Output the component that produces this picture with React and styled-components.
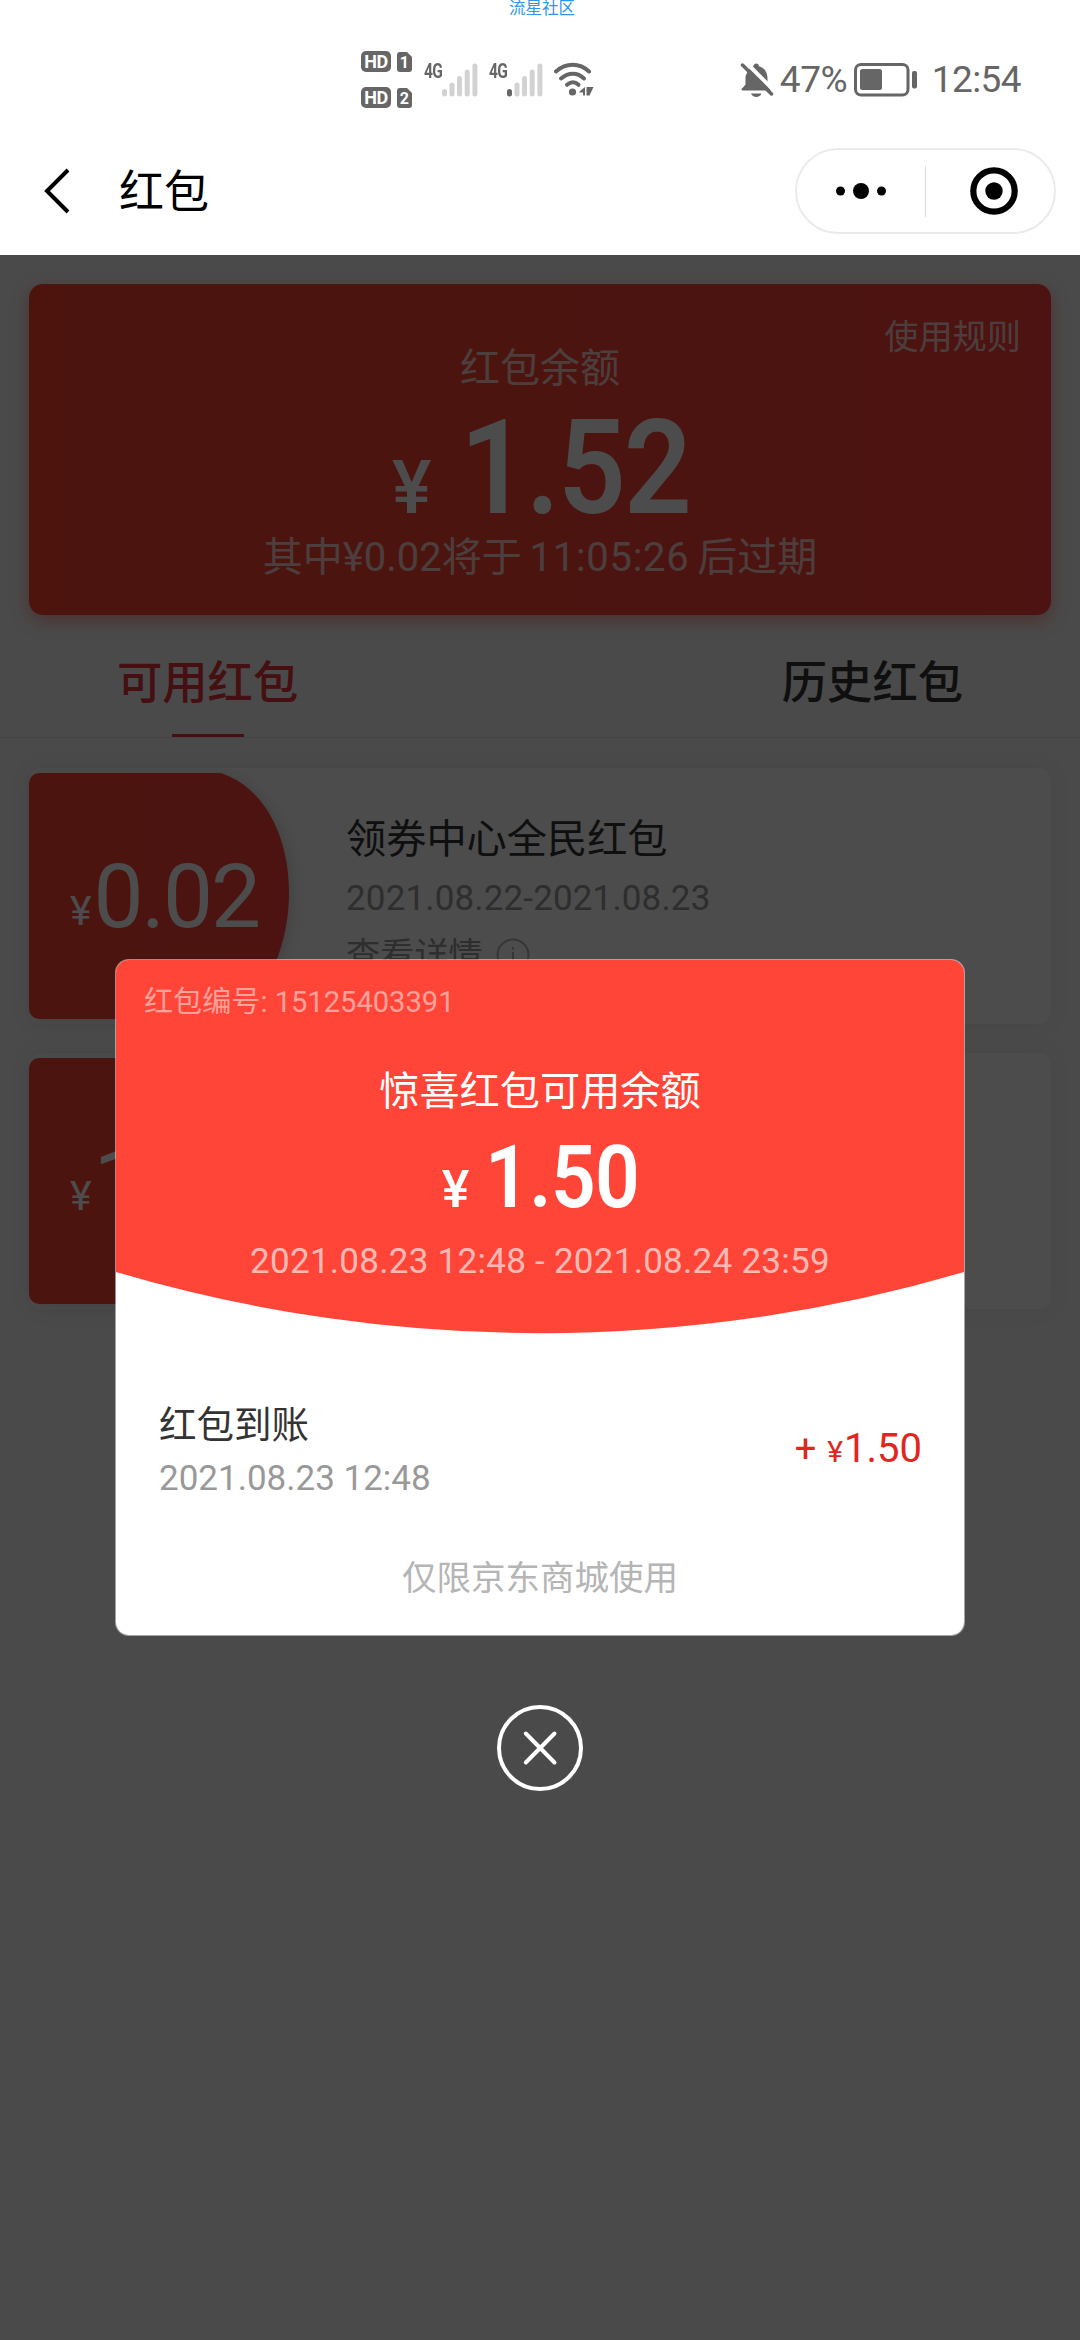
import React, { useState } from 'react'
import styled, { createGlobalStyle } from 'styled-components';

const coupons = [
  { id: 1, amount: '0.02', name: '领券中心全民红包', date: '2021.08.22-2021.08.23' },
  { id: 2, amount: '1.50', name: '惊喜红包', date: '2021.08.23-2021.08.24' },
];

const Signal = ({ active }) => (
  <svg width='36' height='34' viewBox='0 0 36 34'>
    <rect x='0' y='26' width='5' height='7.5' rx='2.5' fill={active ? '#666' : '#d2d2d2'} />
    <rect x='7.5' y='19.5' width='5' height='14' rx='2.5' fill='#d2d2d2' />
    <rect x='15' y='13' width='5' height='20.5' rx='2.5' fill='#d2d2d2' />
    <rect x='22.7' y='6.5' width='5' height='27' rx='2.5' fill='#d2d2d2' />
    <rect x='30.4' y='0.5' width='5' height='33' rx='2.5' fill='#d2d2d2' />
  </svg>
);

const SimCard = ({ number }) => (
  <svg width='15' height='20' viewBox='0 0 15 20'>
    <path d='M3 0H10L15 5V17a3 3 0 0 1-3 3H3a3 3 0 0 1-3-3V3a3 3 0 0 1 3-3Z' fill='#666' />
    <text x='7.3' y='16' textAnchor='middle' fontFamily='Roboto, sans-serif' fontWeight='700' fontSize='16' fill='#fff'>{number}</text>
  </svg>
);

const Wifi = () => (
  <svg width='42' height='36' viewBox='0 0 42 36'>
    <g fill='none' stroke='#666' strokeWidth='4' strokeLinecap='round'>
      <path d='M2 9.500C12 0.500 25.500 0.500 35 9.500' />
      <path d='M7 16.500C14.500 10 23.500 10 30 16.500' />
      <path d='M13 22.800C17 19.500 21 19.500 24.500 22.800' />
    </g>
    <circle cx='18.500' cy='30' r='3.600' fill='#666' />
    <path d='M31 25V33.500H29V30.500H25.500V29.500Z M32.500 25H39.500L35.500 33.500H32.500Z' fill='#666' />
  </svg>
);

const BellOff = () => (
  <svg width='34' height='36' viewBox='0 0 34 36'>
    <path d='M7 11C9 6 11.500 5 13.500 4.200C13.500 0.500 19 0.500 19 4.200C25 6 27.500 11 27.500 16.500V22.500L31 28.500H3C1 28.500 1 26.500 3 25.500L5.500 22.500V16C5.500 14 6 12.500 7 11Z' fill='#666' />
    <path d='M11 31.500H21.500C20 36 12.500 36 11 31.500Z' fill='#666' />
    <path d='M5 -0.500L34 28.500' stroke='#fff' strokeWidth='4' />
    <path d='M2.500 3L31.500 32' stroke='#666' strokeWidth='3.500' strokeLinecap='round' />
  </svg>
);

const Battery = () => (
  <svg width='64' height='34' viewBox='0 0 64 34'>
    <rect x='1.500' y='1.500' width='52.500' height='30.500' rx='5.500' fill='none' stroke='#666' strokeWidth='3' />
    <rect x='6' y='6' width='22' height='21' rx='2.500' fill='#666' />
    <rect x='58' y='8' width='5' height='17.500' rx='2' fill='#666' />
  </svg>
);

const App = () => {
  const [open, setOpen] = useState(true);
  return (
    <Page>
      <GlobalStyle />
      <Watermark>流星社区</Watermark>
      <StatusBar>
        <NetworkInfo>
          <SimRows>
            <SimRow><HdBadge>HD</HdBadge><SimCard number='1' /></SimRow>
            <SimRow><HdBadge>HD</HdBadge><SimCard number='2' /></SimRow>
          </SimRows>
          <SignalGroup><NetType>4G</NetType><Signal /></SignalGroup>
          <SignalGroup><NetType>4G</NetType><Signal active /></SignalGroup>
          <Wifi />
        </NetworkInfo>
        <DeviceInfo>
          <BellOff />
          <Percent>47%</Percent>
          <Battery />
          <Clock>12:54</Clock>
        </DeviceInfo>
      </StatusBar>
      <NavBar>
        <BackButton>
          <svg width='26' height='46' viewBox='0 0 26 46'>
            <path d='M24 2L3 23L24 44' fill='none' stroke='#000' strokeWidth='4' />
          </svg>
        </BackButton>
        <NavTitle>红包</NavTitle>
        <Capsule>
          <CapsuleButton>
            <svg width='52' height='18' viewBox='0 0 52 18'>
              <circle cx='5.500' cy='9' r='4.500' />
              <circle cx='26' cy='9' r='8' />
              <circle cx='46.500' cy='9' r='4.500' />
            </svg>
          </CapsuleButton>
          <CapsuleLine />
          <CapsuleButton $shift='7px'>
            <svg width='48' height='48' viewBox='0 0 48 48'>
              <circle cx='24' cy='24' r='20.700' fill='none' stroke='#000' strokeWidth='6.200' />
              <circle cx='24' cy='24' r='8.700' />
            </svg>
          </CapsuleButton>
        </Capsule>
      </NavBar>
      <Body>
        <BalanceCard>
          <Rules>使用规则</Rules>
          <BalanceTitle>红包余额</BalanceTitle>
          <BalanceAmount><small>¥</small><Digits $trim='-25px'>1.52</Digits></BalanceAmount>
          <Expire>其中¥0.02将于 <b>11:05:26</b> 后过期</Expire>
        </BalanceCard>
        <Tabs>
          <Tab $active>可用红包</Tab>
          <Tab>历史红包</Tab>
        </Tabs>
        <CouponList>
          {
            coupons.map((data) => (
              <Coupon key={data.id}>
                <CouponLeft>
                  <CouponShape width='260' height='246' viewBox='0 0 260 246'>
                    <defs>
                      <linearGradient id={`red${data.id}`} x1='0' x2='1' y1='0' y2='0'>
                        <stop offset='0' stopColor='#ff4530' />
                        <stop offset='1' stopColor='#ff423c' />
                      </linearGradient>
                    </defs>
                    <path d='M10 0H192C276 28 284 182 206 246H10A10 10 0 0 1 0 236V10A10 10 0 0 1 10 0Z' fill={`url(#red${data.id})`} />
                  </CouponShape>
                  <CouponAmount><small>¥</small>{data.amount}</CouponAmount>
                </CouponLeft>
                <CouponInfo>
                  <CouponName>{data.name}</CouponName>
                  <CouponDate>{data.date}</CouponDate>
                  <CouponDetail>
                    查看详情
                    <svg width='34' height='34' viewBox='0 0 34 34' fill='none' stroke='#b4b4b4' strokeWidth='2'>
                      <circle cx='17' cy='17' r='15.500' />
                      <path d='M17 14V25M17 9V11.500' />
                    </svg>
                  </CouponDetail>
                </CouponInfo>
              </Coupon>
            ))
          }
        </CouponList>
        {open && (
          <Overlay>
            <Modal>
              <ModalTop>
                <ModalCode>红包编号: 15125403391</ModalCode>
                <ModalTitle>惊喜红包可用余额</ModalTitle>
                <ModalAmount><small>¥</small><Digits $trim='-16px'>1.50</Digits></ModalAmount>
                <ModalRange>2021.08.23 12:48 - 2021.08.24 23:59</ModalRange>
              </ModalTop>
              <Record>
                <div>
                  <RecordName>红包到账</RecordName>
                  <RecordTime>2021.08.23 12:48</RecordTime>
                </div>
                <RecordAmount><span>+</span><small>¥</small>1.50</RecordAmount>
              </Record>
              <Limit>仅限京东商城使用</Limit>
            </Modal>
            <CloseButton onClick={() => setOpen(false)}>
              <svg width='88' height='88' viewBox='0 0 88 88' fill='none' stroke='#fff' strokeLinecap='round'>
                <circle cx='44' cy='44' r='41' strokeWidth='4' />
                <path d='M29.800 29.500L58.500 58.500M58.500 29.500L29.800 58.500' strokeWidth='4' />
              </svg>
            </CloseButton>
          </Overlay>
        )}
      </Body>
    </Page>
  )
}

const GlobalStyle = createGlobalStyle`
  * {
    box-sizing: border-box;
  }
  body {
    margin: 0;
    font-family: Roboto, 'Noto Sans CJK SC', sans-serif;
  }
  svg {
    display: block;
    flex: none;
  }
  button {
    padding: 0;
    border: 0;
    background: transparent;
    cursor: pointer;
  }
`;

const Page = styled.div`
  display: flex;
  flex-direction: column;
  width: 1080px;
  height: 2340px;
  overflow: hidden;
  background-color: #fff;
  white-space: nowrap;
`;

const Watermark = styled.div`
  height: 18px;
  padding-left: 4px;
  font-size: 16.5px;
  line-height: 17px;
  text-align: center;
  color: #2f97ea;
`;

const StatusBar = styled.div`
  display: flex;
  justify-content: space-between;
  align-items: center;
  height: 124px;
  padding: 0 59px 1px 361px;
  color: #666;
`;

const NetworkInfo = styled.div`
  display: flex;
  align-items: center;
`;

const SimRows = styled.div`
  display: flex;
  flex-direction: column;
  gap: 15px;
  margin-right: 12px;
`;

const SimRow = styled.div`
  display: flex;
  align-items: center;
  gap: 6px;
`;

const HdBadge = styled.span`
  width: 30px;
  height: 21px;
  border-radius: 5px;
  background-color: #666;
  color: #fff;
  font-size: 18px;
  font-weight: 700;
  line-height: 21px;
  text-align: center;
  letter-spacing: -.5px;
`;

const SignalGroup = styled.div`
  display: flex;
  width: 53px;
  margin-right: 12px;
`;

const NetType = styled.span`
  width: 18px;
  font-size: 21px;
  font-weight: 700;
  line-height: 16px;
  letter-spacing: -1px;
  transform: scaleX(.74);
  transform-origin: left;
`;

const DeviceInfo = styled.div`
  display: flex;
  align-items: center;
`;

const Percent = styled.span`
  width: 67px;
  margin: 0 7px 0 6px;
  font-size: 37px;
  letter-spacing: -.5px;
`;

const Clock = styled.span`
  margin-left: 14px;
  font-size: 37px;
  letter-spacing: -.6px;
`;

const NavBar = styled.div`
  display: flex;
  align-items: center;
  height: 113px;
  padding: 0 24px 15px 44px;
`;

const BackButton = styled.button`
  margin-right: 49px;
`;

const NavTitle = styled.h1`
  margin: 4px 0 0;
  font-size: 45px;
  font-weight: 400;
  line-height: 60px;
`;

const Capsule = styled.div`
  display: flex;
  align-items: center;
  width: 261px;
  height: 86px;
  margin-left: auto;
  border: 2px solid #ebebeb;
  border-radius: 43px;
`;

const CapsuleButton = styled.button`
  display: flex;
  flex: none;
  justify-content: center;
  width: 128px;
  padding-left: ${({ $shift }) => $shift || 0};
`;

const CapsuleLine = styled.i`
  width: 1px;
  height: 51px;
  background-color: #dcdcdc;
`;

const Body = styled.main`
  position: relative;
  flex: 1;
  padding-top: 29px;
  background-color: #f7f7f7;
`;

const BalanceCard = styled.section`
  display: flex;
  flex-direction: column;
  align-items: center;
  height: 331px;
  margin: 0 29px;
  padding-top: 33px;
  border-radius: 14px;
  background: linear-gradient(90deg, #ff452e, #ff423c);
  box-shadow: 0 6px 18px rgba(255, 69, 50, .45);
  color: rgba(255, 255, 255, .75);
`;

const Rules = styled.span`
  align-self: flex-end;
  margin-right: 30px;
  font-size: 34.2px;
  line-height: 40px;
`;

const BalanceTitle = styled.div`
  margin-top: -13px;
  font-size: 40px;
  line-height: 50px;
`;

const Digits = styled.span`
  display: inline-block;
  margin-right: ${({ $trim }) => $trim};
  transform: scaleX(.9);
  transform-origin: left;
`;

const BalanceAmount = styled.div`
  height: 130px;
  margin: 9px 0 0 3px;
  font-size: 132px;
  font-weight: 600;
  line-height: 130px;
  letter-spacing: -2px;
  color: #fff;
  small {
    margin-right: 31px;
    font-size: 74px;
    font-weight: 500;
    line-height: 1;
  }
`;

const Expire = styled.div`
  font-size: 40px;
  line-height: 50px;
  b {
    margin: 0 -2px;
    font-weight: 400;
    letter-spacing: .7px;
  }
`;

const Tabs = styled.div`
  display: flex;
  justify-content: space-between;
  height: 123px;
  padding: 36px 117px 0;
  border-bottom: 1px solid #e4e4e4;
`;

const Tab = styled.div`
  display: flex;
  flex-direction: column;
  justify-content: space-between;
  align-items: center;
  font-size: 45.3px;
  font-weight: 500;
  line-height: 66px;
  color: ${({ $active }) => $active ? '#e9343a' : '#333'};
  &::after {
    content: '';
    width: 72px;
    height: 3px;
    background-color: ${({ $active }) => $active ? '#e9343a' : 'transparent'};
  }
`;

const CouponList = styled.div`
  display: flex;
  flex-direction: column;
  gap: 29px;
  padding: 30px 29px;
`;

const Coupon = styled.div`
  display: flex;
  height: 256px;
  padding: 5px 0;
  border-radius: 12px;
  background-color: #fdfdfd;
  box-shadow: 0 0 24px rgba(0, 0, 0, .06);
`;

const CouponLeft = styled.div`
  position: relative;
  width: 260px;
  height: 246px;
`;

const CouponShape = styled.svg`
  position: absolute;
  inset: 0;
  filter: drop-shadow(4px 2px 6px rgba(0, 0, 0, .12));
`;

const CouponAmount = styled.div`
  position: relative;
  padding: 72px 0 0 41px;
  font-size: 89px;
  line-height: 104px;
  letter-spacing: -2px;
  color: #fff;
  small {
    margin-right: 4px;
    font-size: 41px;
    line-height: 1;
    vertical-align: 2px;
  }
`;

const CouponInfo = styled.div`
  padding: 41px 0 0 57px;
  color: #999;
`;

const CouponName = styled.div`
  font-size: 40.2px;
  line-height: 52px;
  color: #333;
`;

const CouponDate = styled.div`
  margin-top: 8px;
  font-size: 35px;
  line-height: 50px;
  letter-spacing: .15px;
`;

const CouponDetail = styled.div`
  display: flex;
  align-items: center;
  gap: 13px;
  margin-top: 7px;
  font-size: 34.2px;
  line-height: 48px;
`;

const Overlay = styled.div`
  position: absolute;
  inset: 0;
  display: flex;
  flex-direction: column;
  align-items: center;
  padding-top: 704px;
  background-color: rgba(0, 0, 0, .7);
`;

const Modal = styled.div`
  width: 850px;
  height: 677px;
  border: 1px solid rgba(255, 255, 255, .5);
  border-radius: 14px;
  overflow: hidden;
  background-color: #fff;
  background-clip: padding-box;
`;

const ModalTop = styled.div`
  display: flex;
  flex-direction: column;
  align-items: center;
  width: 848px;
  height: 374px;
  padding-top: 22px;
  background: #ff4537;
  clip-path: path('M0 0H848V312A1500 1500 0 0 1 0 312Z');
  color: #fff;
`;

const ModalCode = styled.div`
  align-self: flex-start;
  margin-left: 28px;
  font-size: 29.1px;
  line-height: 40px;
  color: rgba(255, 255, 255, .5);
`;

const ModalTitle = styled.div`
  margin-top: 45px;
  font-size: 40.2px;
  line-height: 50px;
`;

const ModalAmount = styled.div`
  height: 104px;
  margin: 8px 0 0 2px;
  font-size: 87px;
  font-weight: 600;
  line-height: 104px;
  letter-spacing: -.6px;
  small {
    margin-right: 16px;
    font-size: 52px;
    font-weight: 500;
    line-height: 1;
  }
`;

const ModalRange = styled.div`
  margin-top: 8px;
  font-size: 35px;
  line-height: 50px;
  letter-spacing: .27px;
  color: rgba(255, 255, 255, .65);
`;

const Record = styled.div`
  display: flex;
  justify-content: space-between;
  align-items: center;
  padding: 66px 42px 0 43px;
`;

const RecordName = styled.div`
  font-size: 37.5px;
  line-height: 50px;
  color: #333;
`;

const RecordTime = styled.div`
  margin-top: 4px;
  font-size: 35px;
  line-height: 50px;
  color: #999;
`;

const RecordAmount = styled.div`
  margin-top: -3px;
  font-size: 40px;
  line-height: 50px;
  color: #e1251f;
  span {
    margin-right: 11px;
    font-size: 38px;
  }
  small {
    margin-right: 1px;
    font-size: 30px;
  }
`;

const Limit = styled.div`
  margin-top: 49px;
  font-size: 34.5px;
  line-height: 50px;
  text-align: center;
  color: #b5b5b5;
`;

const CloseButton = styled.button`
  margin-top: 68px;
`;

export default App;
